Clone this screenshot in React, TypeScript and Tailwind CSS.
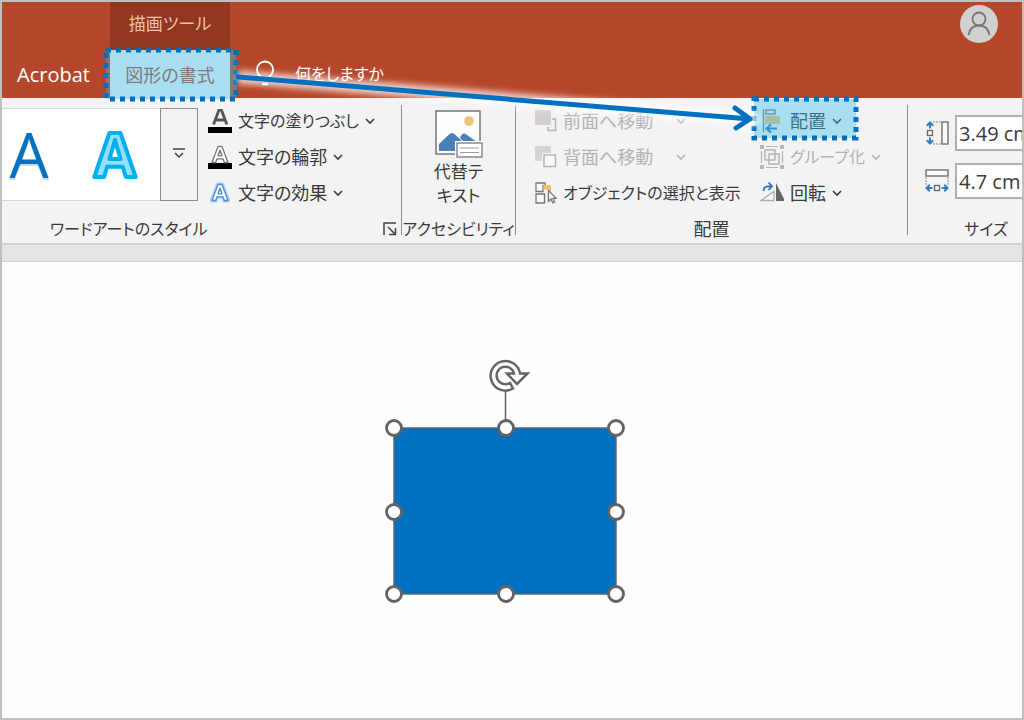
import clsx from "clsx"
import type { ReactNode } from "react"

const Chevron = () => (
  <svg
    className="w-[10px] h-[10px] shrink-0"
    viewBox="0 0 10 10"
    fill="none"
    stroke="currentColor"
    strokeWidth="1.6"
    aria-hidden="true"
  >
    <path d="M1 3l4 4 4-4" />
  </svg>
)

const TextFillIcon = () => (
  <svg className="w-6 h-6 shrink-0" viewBox="0 0 24 24" aria-hidden="true">
    <path
      d="M5.500 15.500L11 1h2.400l5.500 14.500M7.500 11h9.400"
      fill="none"
      stroke="#555"
      strokeWidth="2.800"
    />
    <rect y="18" width="24" height="6" fill="#000" />
  </svg>
)

const OutlineA = ({ color, fill }: { color: string; fill: string }) => (
  <path
    d="M4 17.500L10 1.500h4l6 16h-3.700l-1.300-3.700H9l-1.300 3.700zM10 10.800h4L12 5z"
    fill={fill}
    stroke={color}
    strokeWidth="1.300"
    strokeLinejoin="round"
  />
)

const TextOutlineIcon = () => (
  <svg className="w-6 h-6 shrink-0" viewBox="0 0 24 24" aria-hidden="true">
    <rect y="18" width="24" height="6" fill="#000" />
    <OutlineA color="#777" fill="#fff" />
  </svg>
)

const TextEffectIcon = () => (
  <svg className="w-6 h-6 shrink-0" viewBox="0 0 24 24" aria-hidden="true">
    <g transform="translate(0 2)">
      <path
        d="M4 17.500L10 1.500h4l6 16h-3.700l-1.300-3.700H9l-1.300 3.700z"
        fill="none"
        stroke="#a9cdee"
        strokeWidth="4"
        strokeLinejoin="round"
      />
      <OutlineA color="#4a8fd0" fill="#fff" />
    </g>
  </svg>
)

const BringForwardIcon = () => (
  <svg className="w-[22px] h-[22px] shrink-0" viewBox="0 0 22 22" aria-hidden="true">
    <path d="M13 20.500h7.500V9H17M13 17v3.500" fill="none" stroke="#b5b2b4" strokeWidth="1.500" />
    <rect width="16" height="15" fill="#d5cfd4" />
  </svg>
)

const SendBackwardIcon = () => (
  <svg className="w-[22px] h-[22px] shrink-0" viewBox="0 0 22 22" aria-hidden="true">
    <rect width="16" height="15" fill="#d9d3d8" />
    <rect x="7" y="7" width="15" height="15" fill="#f3f3f3" />
    <rect x="9" y="9" width="11.500" height="11.500" fill="#f8f8f8" stroke="#b5b2b4" strokeWidth="1.500" />
  </svg>
)

const SelectionIcon = () => (
  <svg className="w-[22px] h-[22px] shrink-0" viewBox="0 0 22 22" aria-hidden="true">
    <path
      d="M1 9.500V1h9v2.500H8v6zM1 12h8.500v9H1z"
      fill="#fafafa"
      stroke="#777"
      strokeWidth="1.300"
    />
    <path d="M8.500 3H16v8h-3V7.500H8.500z" fill="#f0bf6c" />
    <path
      d="M13.500 8.500v11l2.500-2.500 1.800 4 1.900-.9-1.800-3.800h3.300z"
      fill="#fff"
      stroke="#777"
      strokeWidth="1.300"
    />
  </svg>
)

const AlignIcon = () => (
  <svg className="w-6 h-6 shrink-0" viewBox="0 0 24 24" fill="none" aria-hidden="true">
    <path d="M3.500 0v23" stroke="#777" strokeWidth="1.300" />
    <rect x="6" y="1" width="9" height="4" stroke="#777" strokeWidth="1.300" />
    <rect x="5" y="7" width="15" height="8" fill="#efc273" />
    <path d="M17 19.500H7M11 15.500l-4.500 4 4.500 4" stroke="#2e75b6" strokeWidth="2.200" />
  </svg>
)

const GroupIcon = () => (
  <svg className="w-6 h-6 shrink-0" viewBox="0 0 24 24" fill="none" stroke="#b8b5b7" aria-hidden="true">
    <rect x="5" y="5" width="10" height="10" strokeWidth="1.500" />
    <rect x="9" y="9" width="10" height="10" strokeWidth="1.500" />
    <path d="M6 1.500h12M6 22.500h12M1.500 6v12M22.500 6v12" strokeWidth="1.200" />
    <path d="M0 2h4M20 2h4M0 22h4M20 22h4" strokeWidth="4" />
  </svg>
)

const RotateIcon = () => (
  <svg className="w-6 h-6 shrink-0" viewBox="0 0 24 24" fill="none" aria-hidden="true">
    <path d="M1 19.500h13V10.500z" fill="#fafafa" stroke="#aaa" strokeWidth="1.300" />
    <path d="M16 2v18h9z" fill="#666" />
    <path d="M3.500 10C3.500 6 6 5 11.500 5.200M8.500 1.500l3.500 3.700L8.500 9" stroke="#2e75b6" strokeWidth="1.800" />
  </svg>
)

const HeightIcon = () => (
  <svg className="w-6 h-6 shrink-0" viewBox="0 0 24 24" fill="none" aria-hidden="true">
    <path d="M8 1h8M8 23h8" stroke="#888" strokeDasharray="2 1" />
    <rect x="17" y="1" width="6" height="22" fill="#fafafa" stroke="#666" strokeWidth="1.300" />
    <rect x="2.500" y="9.500" width="5" height="5" stroke="#666" strokeWidth="1.300" />
    <path d="M5 7.500V2M1.800 4.800L5 1.500l3.200 3.300M5 16.500V22M1.800 19.200L5 22.500l3.200-3.300" stroke="#3a7cb8" strokeWidth="2" />
  </svg>
)

const WidthIcon = () => (
  <svg className="w-6 h-6 shrink-0" viewBox="0 0 24 24" fill="none" aria-hidden="true">
    <path d="M1 8v8M23 8v8" stroke="#888" strokeDasharray="2 1" />
    <rect x="1" y="1" width="22" height="6" fill="#fafafa" stroke="#666" strokeWidth="1.300" />
    <rect x="9.500" y="16.500" width="5" height="5" stroke="#666" strokeWidth="1.300" />
    <path d="M7.500 19H2M4.800 15.800L1.500 19l3.300 3.200M16.500 19H22M19.200 15.800l3.300 3.200-3.300 3.200" stroke="#3a7cb8" strokeWidth="2" />
  </svg>
)

const AltTextIcon = () => (
  <svg className="w-12 h-12" viewBox="0 0 48 48" aria-hidden="true">
    <rect x="1" y="1" width="44" height="43" fill="#fefefe" stroke="#777" strokeWidth="1.500" />
    <circle cx="34" cy="11" r="4.800" fill="#ecc57c" />
    <path
      d="M4 41V34L14 24.500q3-3 6 0L28 32h14L31 24.500q-2-2-4 0l-2 3 8 7 9 1v-2V41z"
      fill="#4a80b8"
    />
    <path d="M25 28l3-3q2-2 4 0l7 7H29z" fill="#4a80b8" />
    <rect x="20" y="31" width="28" height="17" fill="#fff" />
    <rect x="22" y="33" width="25" height="14" fill="#fff" stroke="#777" strokeWidth="1.300" />
    <path d="M25 38h19M25 42.500h19" stroke="#999" />
  </svg>
)

type CommandProps = {
  icon: ReactNode
  label: string
  menu?: boolean
  disabled?: boolean
  wide?: boolean
  compact?: boolean
}

const Command = ({ icon, label, menu, disabled, wide, compact }: CommandProps) => (
  <button
    type="button"
    disabled={disabled}
    className={clsx(
      "flex h-9 items-center gap-[6px] whitespace-nowrap",
      disabled && "text-[#b5b2b4]",
      compact && "text-base",
    )}
  >
    {icon}
    <span className={clsx("text-left", wide && "w-[107px]")}>{label}</span>
    {menu && <Chevron />}
  </button>
)

const Separator = () => <div className="mt-[7px] mb-2 w-px shrink-0 bg-[#8c8c8c]" />

const GroupLabel = ({ children, compact }: { children: ReactNode; compact?: boolean }) => (
  <div
    className={clsx(
      "flex h-9 items-center justify-center whitespace-nowrap",
      compact && "text-base",
    )}
  >
    {children}
  </div>
)

const Highlight = ({ className }: { className: string }) => (
  <svg className={clsx("pointer-events-none absolute", className)} aria-hidden="true">
    <rect width="100%" height="100%" fill="#3abeeb" fillOpacity="0.4" />
    <rect
      width="100%"
      height="100%"
      fill="none"
      stroke="#0070c0"
      strokeWidth="5"
      strokeDasharray="5 5"
    />
  </svg>
)

const Header = () => (
  <header className="flex h-24 bg-[#b7472a] text-white">
    <div className="flex flex-1 items-end whitespace-nowrap">
      <button type="button" className="h-12 w-[108px] pt-0.5 pl-[15px] text-left text-xl">
        Acrobat
      </button>
      <div className="relative w-30">
        <div className="flex h-12 items-center justify-center bg-[#923821] pb-1 text-[17px] text-[#f5c0ad]">
          描画ツール
        </div>
        <button type="button" className="h-12 w-full bg-[#f3f3f3] pt-0.5 text-[#b7472a]">
          図形の書式
        </button>
        <Highlight className="-left-1 top-12 h-[49px] w-[130px] overflow-visible" />
      </div>
      <button type="button" className="flex h-12 items-center gap-[19px] pl-6 text-base">
        <svg
          className="h-7 w-[22px]"
          viewBox="0 0 22 28"
          fill="none"
          stroke="currentColor"
          strokeWidth="1.800"
          aria-hidden="true"
        >
          <path d="M7.500 20.500v-3C5 15.500 3 13 3 9.500a8 8 0 0 1 16 0c0 3.500-2 6-4.500 8v3z" />
          <path d="M8 24h6" strokeWidth="2.500" />
        </svg>
        何をしますか
      </button>
    </div>
    <button
      type="button"
      aria-label="アカウント"
      className="mt-[3px] mr-6 h-[38px] w-[38px] rounded-full bg-[#d0d0d0]"
    >
      <svg viewBox="0 0 38 38" fill="none" stroke="#757575" strokeWidth="1.800">
        <circle cx="19" cy="14" r="6.500" />
        <path d="M8.500 30c1-6 5-9.500 10.500-9.500S28.500 24 29.500 30" />
      </svg>
    </button>
  </header>
)

const WordArtGroup = () => (
  <section className="w-[399px] shrink-0">
    <div className="flex h-[113px] pt-[5px]">
      <div className="mt-[5px] flex h-[93px] w-[158px] border-y border-[#d5d5d5] bg-white">
        <button type="button" aria-label="塗りつぶし 青" className="w-[54px]">
          <svg viewBox="0 0 54 91" className="h-full w-full">
            <text x="27" y="71" textAnchor="middle" fontSize="62" fontWeight="500" fill="#999" opacity="0.4">
              A
            </text>
            <text x="27" y="69" textAnchor="middle" fontSize="62" fontWeight="500" fill="#0070c0">
              A
            </text>
          </svg>
        </button>
        <button type="button" aria-label="塗りつぶし 水色" className="w-[104px]">
          <svg viewBox="0 0 104 91" className="h-full w-full">
            <text
              x="59"
              y="68"
              textAnchor="middle"
              fontSize="60"
              fontWeight="700"
              fill="#99ddfb"
              stroke="#00b0f0"
              strokeWidth="4"
              strokeLinejoin="round"
            >
              A
            </text>
          </svg>
        </button>
      </div>
      <button
        type="button"
        aria-label="その他"
        className="mt-[5px] flex h-[93px] w-[38px] items-center justify-center border border-[#8c8c8c] pb-1"
      >
        <svg className="h-3 w-3" viewBox="0 0 12 12" fill="none" stroke="#444" strokeWidth="1.500">
          <path d="M0 2h12M2 6l4 4 4-4" />
        </svg>
      </button>
      <div className="ml-[10px] flex flex-col items-start">
        <Command icon={<TextFillIcon />} label="文字の塗りつぶし" menu compact />
        <Command icon={<TextOutlineIcon />} label="文字の輪郭" menu />
        <Command icon={<TextEffectIcon />} label="文字の効果" menu />
      </div>
    </div>
    <div className="flex h-9 items-center justify-between pr-1 pl-12 text-base">
      <span>ワードアートのスタイル</span>
      <button type="button" aria-label="書式の詳細">
        <svg className="h-[14px] w-[14px]" viewBox="0 0 14 14" fill="none" stroke="#444" strokeWidth="1.500">
          <path d="M1 13V1h12M5 5l7 7M12.500 6v6.500H6" />
        </svg>
      </button>
    </div>
  </section>
)

const AccessibilityGroup = () => (
  <section className="w-[113px] shrink-0">
    <div className="flex h-[113px] justify-center pt-3">
      <button type="button" className="flex flex-col items-center text-[17px] leading-6">
        <AltTextIcon />
        <span className="pt-0.5">
          代替テ
          <br />
          キスト
        </span>
      </button>
    </div>
    <GroupLabel compact>アクセシビリティ</GroupLabel>
  </section>
)

const ArrangeGroup = () => (
  <section className="w-[391px] shrink-0">
    <div className="flex h-[113px] pt-[5px] pl-[19px]">
      <div className="flex w-[225px] flex-col items-start">
        <Command icon={<BringForwardIcon />} label="前面へ移動" menu disabled wide />
        <Command icon={<SendBackwardIcon />} label="背面へ移動" menu disabled wide />
        <Command icon={<SelectionIcon />} label="オブジェクトの選択と表示" compact />
      </div>
      <div className="relative flex flex-col items-start">
        <Command icon={<AlignIcon />} label="配置" menu />
        <Command icon={<GroupIcon />} label="グループ化" menu disabled compact />
        <Command icon={<RotateIcon />} label="回転" menu />
        <Highlight className="-left-[6px] -top-1 h-[39px] w-[102px] overflow-visible" />
      </div>
    </div>
    <GroupLabel>配置</GroupLabel>
  </section>
)

const SizeField = ({ icon, label, value }: { icon: ReactNode; label: string; value: string }) => (
  <label className="flex items-center gap-[6px]">
    {icon}
    <input
      aria-label={label}
      defaultValue={value}
      className="h-9 w-[100px] border-2 border-[#b0b0b0] bg-white pl-[2px] text-xl"
    />
  </label>
)

const SizeGroup = () => (
  <section className="min-w-0 flex-1 overflow-hidden">
    <div className="w-[156px]">
      <div className="flex h-[113px] flex-col gap-3 pt-[17px] pl-[17px]">
        <SizeField icon={<HeightIcon />} label="高さ" value="3.49 cm" />
        <SizeField icon={<WidthIcon />} label="幅" value="4.7 cm" />
      </div>
      <GroupLabel compact>サイズ</GroupLabel>
    </div>
  </section>
)

const HANDLES = [
  [14, 78],
  [126, 78],
  [236, 78],
  [14, 162],
  [236, 162],
  [14, 244],
  [126, 244],
  [236, 244],
]

const SelectedShape = () => (
  <svg
    className="absolute top-[88px] left-[378px] h-[256px] w-[250px]"
    viewBox="0 0 250 256"
    role="img"
    aria-label="四角形"
  >
    <rect x="14" y="78" width="222" height="166" fill="#0070c0" stroke="#666" strokeWidth="1.500" />
    <path d="M125.500 40v30" stroke="#666" strokeWidth="1.500" />
    <path
      d="M133 38.500A14.800 14.800 0 1 1 140 23.500h7.500L137 34 127 23.500h7A8.800 8.800 0 1 0 130 33z"
      fill="#fff"
      stroke="#666"
      strokeWidth="2.500"
    />
    {HANDLES.map(([x, y]) => (
      <circle key={`${x}-${y}`} cx={x} cy={y} r="7.500" fill="#fff" stroke="#636363" strokeWidth="2.800" />
    ))}
  </svg>
)

const ArrowPath = () => <path d="M236 75L748 117M733 106l15 11-14 9" />

// Callout arrow from the format tab to the align button
const CalloutArrow = () => (
  <svg
    className="pointer-events-none absolute top-0 left-0 h-[150px] w-[800px]"
    viewBox="0 0 800 150"
    fill="none"
    aria-hidden="true"
  >
    <defs>
      <filter id="glow" x="-10%" y="-50%" width="120%" height="200%">
        <feGaussianBlur stdDeviation="3" />
      </filter>
    </defs>
    <g stroke="#fff" strokeWidth="13" opacity="0.75" filter="url(#glow)">
      <ArrowPath />
    </g>
    <g stroke="#0070c0" strokeWidth="5" strokeLinecap="round" strokeLinejoin="round">
      <ArrowPath />
    </g>
  </svg>
)

export default function App() {
  return (
    <div className="relative flex min-h-screen flex-col overflow-hidden border-2 border-[#c0c0c0] bg-white font-['Open_Sans','Noto_Sans_CJK_JP',sans-serif] text-lg text-[#3a3a3a] [font-feature-settings:'palt']">
      <Header />
      <div className="flex h-[147px] border-b-2 border-[#d2d2d2] bg-[#f3f3f3]">
        <WordArtGroup />
        <Separator />
        <AccessibilityGroup />
        <Separator />
        <ArrangeGroup />
        <Separator />
        <SizeGroup />
      </div>
      <div className="h-[17px] border-b border-[#cfcfcf] bg-[#e4e4e4]" />
      <main className="relative flex-1 bg-[#fefefe]">
        <SelectedShape />
      </main>
      <CalloutArrow />
    </div>
  )
}
